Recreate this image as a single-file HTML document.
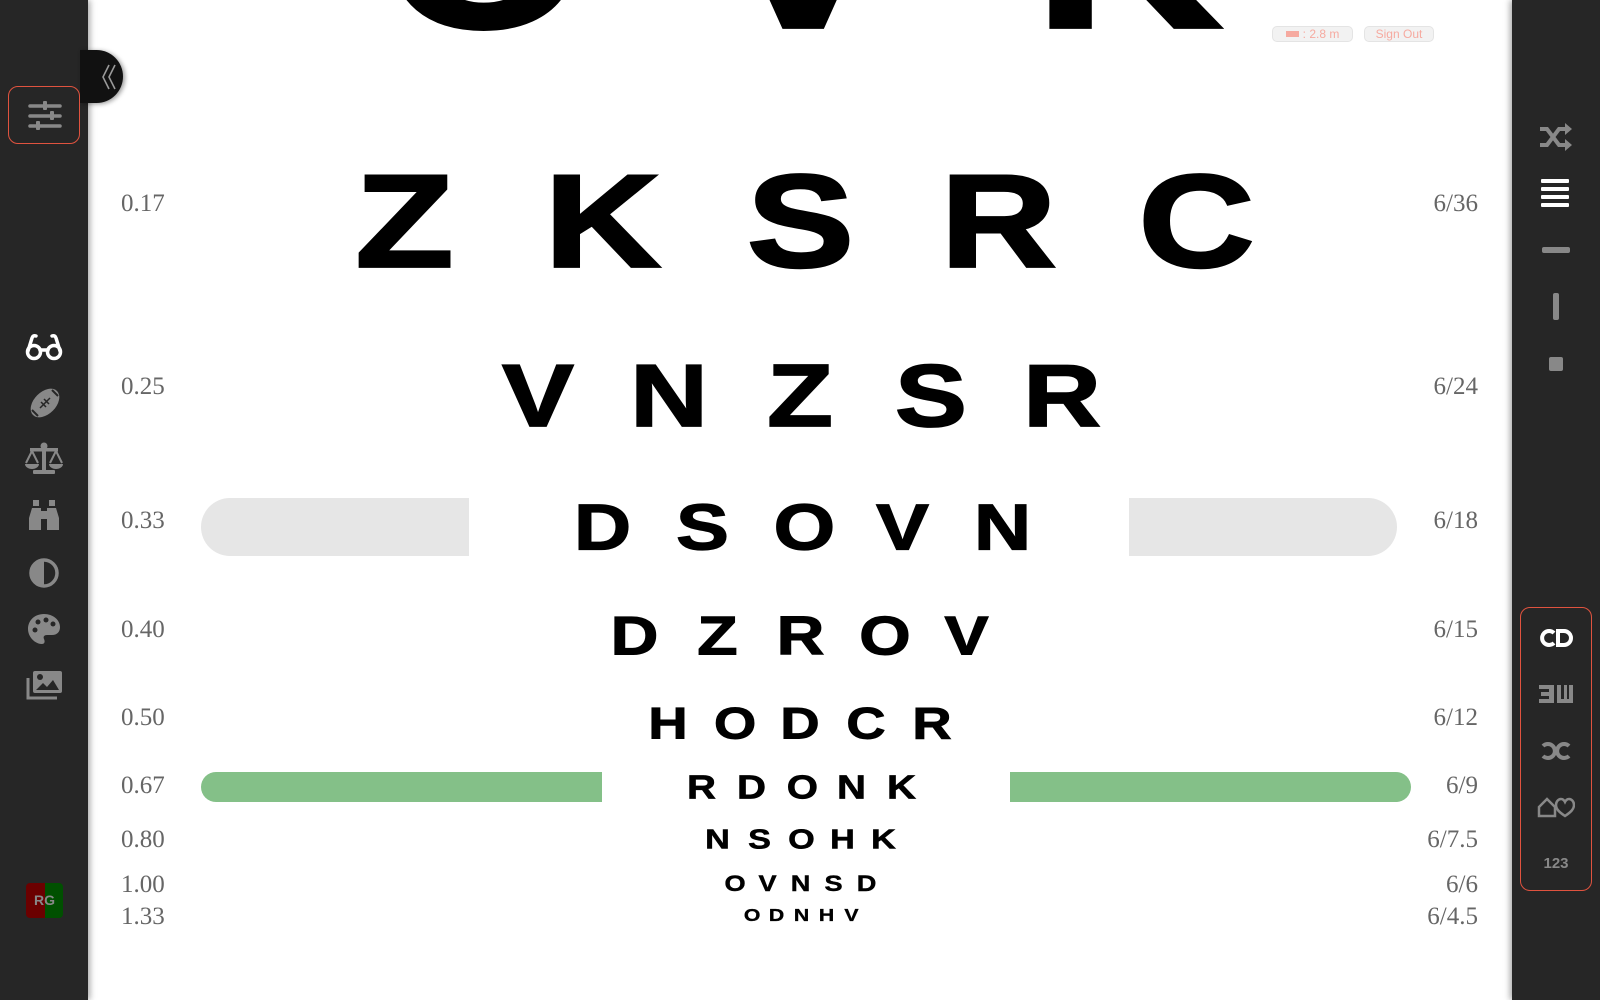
<!DOCTYPE html>
<html><head><meta charset="utf-8"><style>
*{margin:0;padding:0;box-sizing:border-box}
html,body{width:1600px;height:1000px;overflow:hidden;background:#fff;position:relative;font-family:"Liberation Sans",sans-serif}
.row{position:absolute;display:flex}
.row span{display:inline-block;text-align:center;font-weight:bold;color:#000;font-family:"Liberation Sans",sans-serif;transform:scale(1.18,0.97);-webkit-text-stroke:0.02em #000}
.lab{position:absolute;font-family:"Liberation Serif",serif;font-size:25px;color:#666;line-height:30px;height:30px}
.l{left:121px}
.r{right:122px;text-align:right}
.side{position:absolute;top:0;height:1000px;width:88px;background:#262626}
.ic{position:absolute}
</style></head><body>

<div style="position:absolute;left:201px;top:498px;width:268px;height:58px;background:#e6e6e6;border-radius:29px 0 0 29px"></div>
<div style="position:absolute;left:1129px;top:498px;width:268px;height:58px;background:#e6e6e6;border-radius:0 29px 29px 0"></div>
<div style="position:absolute;left:201px;top:772px;width:401px;height:30px;background:#84c088;border-radius:15px 0 0 15px"></div>
<div style="position:absolute;left:1010px;top:772px;width:401px;height:30px;background:#84c088;border-radius:0 15px 15px 0"></div>

<div class="row" style="left:398px;top:-126px;gap:165px"><span style="width:160px;height:160px;font-size:219px;line-height:160px">O</span><span style="width:160px;height:160px;font-size:219px;line-height:160px">V</span><span style="width:160px;height:160px;font-size:219px;line-height:160px">K</span></div>
<div class="row" style="left:355px;top:172px;gap:99px"><span style="width:99px;font-size:136px;line-height:99px">Z</span><span style="width:99px;font-size:136px;line-height:99px">K</span><span style="width:99px;font-size:136px;line-height:99px">S</span><span style="width:99px;font-size:136px;line-height:99px">R</span><span style="width:99px;font-size:136px;line-height:99px">C</span></div>
<div class="row" style="left:505px;top:364px;gap:65px"><span style="width:66px;font-size:91px;line-height:66px">V</span><span style="width:66px;font-size:91px;line-height:66px">N</span><span style="width:66px;font-size:91px;line-height:66px">Z</span><span style="width:66px;font-size:91px;line-height:66px">S</span><span style="width:66px;font-size:91px;line-height:66px">R</span></div>
<div class="row" style="left:578px;top:503px;gap:51px"><span style="width:49px;font-size:67px;line-height:49px">D</span><span style="width:49px;font-size:67px;line-height:49px">S</span><span style="width:49px;font-size:67px;line-height:49px">O</span><span style="width:49px;font-size:67px;line-height:49px">V</span><span style="width:49px;font-size:67px;line-height:49px">N</span></div>
<div class="row" style="left:614px;top:615px;gap:42px"><span style="width:41px;font-size:56px;line-height:41px">D</span><span style="width:41px;font-size:56px;line-height:41px">Z</span><span style="width:41px;font-size:56px;line-height:41px">R</span><span style="width:41px;font-size:56px;line-height:41px">O</span><span style="width:41px;font-size:56px;line-height:41px">V</span></div>
<div class="row" style="left:651px;top:706px;gap:32px"><span style="width:34px;font-size:46px;line-height:34px">H</span><span style="width:34px;font-size:46px;line-height:34px">O</span><span style="width:34px;font-size:46px;line-height:34px">D</span><span style="width:34px;font-size:46px;line-height:34px">C</span><span style="width:34px;font-size:46px;line-height:34px">R</span></div>
<div class="row" style="left:689px;top:776px;gap:25px"><span style="width:25px;font-size:34px;line-height:25px">R</span><span style="width:25px;font-size:34px;line-height:25px">D</span><span style="width:25px;font-size:34px;line-height:25px">O</span><span style="width:25px;font-size:34px;line-height:25px">N</span><span style="width:25px;font-size:34px;line-height:25px">K</span></div>
<div class="row" style="left:707px;top:830px;gap:20.5px"><span style="width:21px;font-size:29px;line-height:21px">N</span><span style="width:21px;font-size:29px;line-height:21px">S</span><span style="width:21px;font-size:29px;line-height:21px">O</span><span style="width:21px;font-size:29px;line-height:21px">H</span><span style="width:21px;font-size:29px;line-height:21px">K</span></div>
<div class="row" style="left:726px;top:875px;gap:16px"><span style="width:17px;font-size:23px;line-height:17px">O</span><span style="width:17px;font-size:23px;line-height:17px">V</span><span style="width:17px;font-size:23px;line-height:17px">N</span><span style="width:17px;font-size:23px;line-height:17px">S</span><span style="width:17px;font-size:23px;line-height:17px">D</span></div>
<div class="row" style="left:745px;top:909px;gap:12px"><span style="width:13px;font-size:18px;line-height:13px">O</span><span style="width:13px;font-size:18px;line-height:13px">D</span><span style="width:13px;font-size:18px;line-height:13px">N</span><span style="width:13px;font-size:18px;line-height:13px">H</span><span style="width:13px;font-size:18px;line-height:13px">V</span></div>

<div class="lab l" style="top:189px">0.17</div><div class="lab r" style="top:189px">6/36</div>
<div class="lab l" style="top:372px">0.25</div><div class="lab r" style="top:372px">6/24</div>
<div class="lab l" style="top:506px">0.33</div><div class="lab r" style="top:506px">6/18</div>
<div class="lab l" style="top:615px">0.40</div><div class="lab r" style="top:615px">6/15</div>
<div class="lab l" style="top:703px">0.50</div><div class="lab r" style="top:703px">6/12</div>
<div class="lab l" style="top:771px">0.67</div><div class="lab r" style="top:771px">6/9</div>
<div class="lab l" style="top:825px">0.80</div><div class="lab r" style="top:825px">6/7.5</div>
<div class="lab l" style="top:870px">1.00</div><div class="lab r" style="top:870px">6/6</div>
<div class="lab l" style="top:902px">1.33</div><div class="lab r" style="top:902px">6/4.5</div>

<div style="position:absolute;left:1272px;top:26px;width:81px;height:16px;background:#f2f2f2;border:1px solid #e4e4e4;border-radius:5px;font-size:12px;line-height:14px;color:#f6aaa0;text-align:center"><span style="display:inline-block;width:13px;height:6px;background:#f6aaa0;vertical-align:middle;margin-right:4px;margin-top:-2px"></span>: 2.8 m</div>
<div style="position:absolute;left:1364px;top:26px;width:70px;height:16px;background:#f2f2f2;border:1px solid #e4e4e4;border-radius:5px;font-size:12px;line-height:14px;color:#f6aaa0;text-align:center">Sign Out</div>

<div class="side" style="left:0;box-shadow:2px 0 6px rgba(0,0,0,.35)"></div>
<div style="position:absolute;left:80px;top:50px;width:43px;height:53px;background:#111;border-radius:0 27px 27px 0;box-shadow:2px 1px 5px rgba(0,0,0,.4)"></div>
<svg class="ic" style="left:100px;top:62px" width="18" height="30" viewBox="0 0 18 30"><path d="M9 3L3 15L9 27M15 3L9 15L15 27" stroke="#999" stroke-width="1.6" fill="none"/></svg>
<div style="position:absolute;left:8px;top:86px;width:72px;height:58px;border:1.5px solid #e0533f;border-radius:10px"></div>
<svg class="ic" style="left:28px;top:101px" width="34" height="30" viewBox="0 0 34 30"><g stroke="#888" stroke-width="3.5" stroke-linecap="round"><line x1="2" y1="5" x2="32" y2="5"/><line x1="2" y1="15" x2="32" y2="15"/><line x1="2" y1="25" x2="32" y2="25"/></g><g fill="#888"><rect x="15" y="0" width="4" height="9" rx="1"/><rect x="22" y="10" width="4" height="9" rx="1"/><rect x="8" y="20" width="4" height="9" rx="1"/></g></svg>
<svg class="ic" style="left:25px;top:332px" width="38" height="30" viewBox="0 0 38 30"><g stroke="#fff" stroke-width="3.5" fill="none" stroke-linecap="round"><circle cx="9" cy="20" r="6.5"/><circle cx="29" cy="20" r="6.5"/><path d="M15 18h8M3 19L7 6Q8 3 11 4M35 19L31 6Q30 3 27 4"/></g></svg>
<svg class="ic" style="left:28px;top:386px" width="34" height="34" viewBox="0 0 34 34"><ellipse cx="17" cy="17" rx="17" ry="11" transform="rotate(-45 17 17)" fill="#888"/><path d="M4 24L10 30M24 4L30 10" stroke="#262626" stroke-width="2"/><g stroke="#262626" stroke-width="1.5"><line x1="12" y1="22" x2="22" y2="12"/><line x1="13" y1="16" x2="18" y2="21"/><line x1="16" y1="13" x2="21" y2="18"/></g></svg>
<svg class="ic" style="left:24px;top:442px" width="40" height="34" viewBox="0 0 40 34"><g fill="#888"><rect x="18" y="2" width="4" height="26"/><rect x="6" y="6" width="28" height="3.5"/><rect x="9" y="28" width="22" height="4" rx="1"/><circle cx="20" cy="4" r="3.5"/><path d="M1 22h14a7 5 0 0 1-14 0zM25 22h14a7 5 0 0 1-14 0z"/></g><path d="M8 9L2 21M8 9L14 21M32 9L26 21M32 9L38 21" stroke="#888" stroke-width="2" fill="none"/></svg>
<svg class="ic" style="left:27px;top:499px" width="34" height="32" viewBox="0 0 34 32"><g fill="#888"><rect x="6" y="1" width="6" height="6"/><rect x="22" y="1" width="6" height="6"/><path d="M5 9h9v22H2V19z"/><path d="M29 9h-9v22h12V19z"/><rect x="14" y="12" width="6" height="8"/></g></svg>
<svg class="ic" style="left:28px;top:557px" width="32" height="32" viewBox="0 0 32 32"><circle cx="16" cy="16" r="13" stroke="#888" stroke-width="3.5" fill="none"/><path d="M16 3a13 13 0 0 0 0 26z" fill="#888"/></svg>
<svg class="ic" style="left:27px;top:613px" width="34" height="32" viewBox="0 0 34 32"><path d="M17 1C7 1 1 8 1 16c0 8 7 15 14 15 3 0 3-3 2-5-1-2 0-4 3-4h5c5 0 8-3 8-8C33 7 26 1 17 1z" fill="#888"/><g fill="#262626"><circle cx="8" cy="17" r="2.5"/><circle cx="11" cy="9" r="2.5"/><circle cx="19" cy="7" r="2.5"/><circle cx="26" cy="11" r="2.5"/></g></svg>
<svg class="ic" style="left:25px;top:669px" width="38" height="32" viewBox="0 0 38 32"><path d="M3 9v20h29" stroke="#888" stroke-width="3" fill="none"/><rect x="8" y="2" width="29" height="22" rx="2" fill="#888"/><circle cx="15" cy="8" r="3" fill="#262626"/><path d="M11 21l7-7 4 4 6-7 6 10z" fill="#262626"/></svg>
<div style="position:absolute;left:26px;top:883px;width:37px;height:35px;border-radius:4px;overflow:hidden;display:flex"><div style="width:50%;background:#6b0000"></div><div style="width:50%;background:#005000"></div></div>
<div style="position:absolute;left:26px;top:883px;width:37px;height:35px;line-height:35px;text-align:center;font-weight:bold;font-size:14px;color:#888">RG</div>

<div class="side" style="left:1512px;box-shadow:-2px 0 6px rgba(0,0,0,.35)"></div>
<svg class="ic" style="left:1539px;top:122px" width="34" height="30" viewBox="0 0 34 30"><g stroke="#888" stroke-width="4" fill="none"><path d="M1 7h7l12 16h7"/><path d="M1 23h7l12-16h7"/></g><path d="M26 1l7 6-7 6zM26 17l7 6-7 6z" fill="#888"/></svg>
<svg class="ic" style="left:1541px;top:178px" width="28" height="30" viewBox="0 0 28 30"><g fill="#fff"><rect x="0" y="1" width="28" height="4" rx="1"/><rect x="0" y="9" width="28" height="4" rx="1"/><rect x="0" y="17" width="28" height="4" rx="1"/><rect x="0" y="25" width="28" height="4" rx="1"/></g></svg>
<div style="position:absolute;left:1542px;top:247px;width:28px;height:6px;background:#888;border-radius:2px"></div>
<div style="position:absolute;left:1553px;top:293px;width:6px;height:27px;background:#888;border-radius:2px"></div>
<div style="position:absolute;left:1549px;top:357px;width:14px;height:14px;background:#888;border-radius:2px"></div>
<div style="position:absolute;left:1520px;top:607px;width:72px;height:284px;border:1.5px solid #e0533f;border-radius:10px"></div>
<svg class="ic" style="left:1539px;top:628px" width="34" height="20" viewBox="0 0 34 20"><path d="M15 5a7 7 0 1 0 0 10" stroke="#fff" stroke-width="4" fill="none"/><path d="M19 3h6a7 7 0 0 1 0 14h-6z" stroke="#fff" stroke-width="4" fill="none"/></svg>
<svg class="ic" style="left:1539px;top:685px" width="34" height="18" viewBox="0 0 34 18"><g fill="#888"><path d="M0 0h15v18H0v-4h10v-3H2V7h8V4H0z"/><path d="M18 0h4v14h3V0h3v14h2V0h4v18H18z"/></g></svg>
<svg class="ic" style="left:1539px;top:741px" width="34" height="20" viewBox="0 0 34 20"><g stroke="#888" stroke-width="4" fill="none"><path d="M4 5a7 7 0 1 1 0 10"/><path d="M30 5a7 7 0 1 0 0 10"/></g></svg>
<svg class="ic" style="left:1537px;top:796px" width="38" height="22" viewBox="0 0 38 22"><path d="M2 11L10 3l8 8v9H2z" stroke="#888" stroke-width="2.5" fill="none"/><path d="M28 20c-6-4-9-7-9-11 0-3 2-6 5-6 2 0 3 1 4 3 1-2 2-3 4-3 3 0 5 3 5 6 0 4-3 7-9 11z" stroke="#888" stroke-width="2.5" fill="none"/></svg>
<div style="position:absolute;left:1520px;top:855px;width:72px;text-align:center;font-size:15px;font-weight:bold;color:#888">123</div>

</body></html>
